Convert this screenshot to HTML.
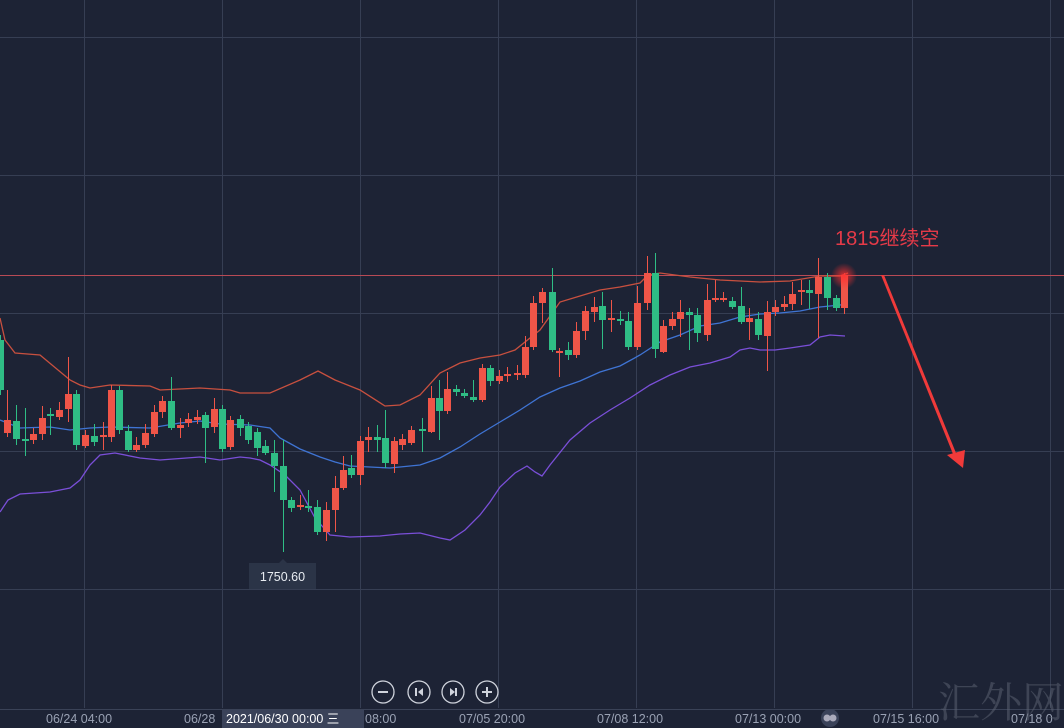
<!DOCTYPE html>
<html><head><meta charset="utf-8"><style>
html,body{margin:0;padding:0;background:#1d2335;width:1064px;height:728px;overflow:hidden}
svg{display:block}
text{font-family:"Liberation Sans","Noto Sans CJK SC",sans-serif}
</style></head><body>
<svg id="s" width="1064" height="728" viewBox="0 0 1064 728" xmlns="http://www.w3.org/2000/svg">
<defs>
<radialGradient id="g"><stop offset="0" stop-color="#ff3030" stop-opacity="0.85"/><stop offset="1" stop-color="#ff3030" stop-opacity="0"/></radialGradient>
</defs>
<rect width="1064" height="728" fill="#1d2335"/>
<g stroke="#363e53" stroke-width="1">
<line x1="0" y1="37.5" x2="1064" y2="37.5"/><line x1="0" y1="175.5" x2="1064" y2="175.5"/>
<line x1="0" y1="313.5" x2="1064" y2="313.5"/><line x1="0" y1="451.5" x2="1064" y2="451.5"/>
<line x1="0" y1="589.5" x2="1064" y2="589.5"/>
<line x1="84.5" y1="0" x2="84.5" y2="708"/><line x1="222.5" y1="0" x2="222.5" y2="708"/>
<line x1="360.5" y1="0" x2="360.5" y2="708"/><line x1="498.5" y1="0" x2="498.5" y2="708"/>
<line x1="636.5" y1="0" x2="636.5" y2="708"/><line x1="774.5" y1="0" x2="774.5" y2="708"/>
<line x1="912.5" y1="0" x2="912.5" y2="708"/><line x1="1050.5" y1="0" x2="1050.5" y2="708"/>
</g>
<line x1="0" y1="709.5" x2="1064" y2="709.5" stroke="#3a4257"/>
<line x1="0" y1="275.5" x2="1064" y2="275.5" stroke="#b84a55" stroke-width="1"/>
<polyline fill="none" stroke="#c8503f" stroke-width="1.3" points="0,318 5,340 15,353 40,355 70,380 80,385 90,388 110,385 150,386 160,390 200,388 230,390 240,393 270,393 300,380 318,371 335,380 360,390 385,406 400,405 420,395 440,373 460,363 480,358 500,355 515,350 540,330 560,302 580,296 600,290 620,287 640,283 648,275 660,273 690,277 720,280 760,282 790,281 820,276 840,276 848,273"/>
<polyline fill="none" stroke="#3f74d4" stroke-width="1.3" points="0,420 20,428 50,427 70,430 90,428 110,427 150,428 180,423 200,421 220,424 250,425 270,428 280,438 300,449 320,457 335,462 350,466 370,467 390,468 420,465 440,458 460,447 480,434 500,422 520,410 540,397 560,388 580,381 600,372 620,366 640,355 660,342 680,335 700,326 720,323 740,317 760,314 780,313 800,311 820,307 840,305 848,304"/>
<polyline fill="none" stroke="#7a4fd8" stroke-width="1.3" points="0,512 8,500 20,494 50,492 70,488 80,480 90,465 100,455 115,453 140,458 160,460 200,457 220,460 240,457 250,458 260,460 270,465 285,475 300,490 315,518 330,535 350,537 380,536 400,534 420,533 440,538 450,540 465,530 480,515 490,502 500,487 515,473 527,466 535,472 542,476 550,465 570,440 590,423 610,410 630,398 650,385 670,375 690,367 710,363 730,357 740,350 750,348 760,350 775,350 790,348 810,345 820,337 830,335 845,336"/>
<g id="c"></g>
<circle cx="844" cy="276" r="13" fill="url(#g)"/>
<text x="835" y="245" font-size="20" fill="#e63a48">1815继续空</text>
<polygon points="881,275 884,275 958,458 955,459" fill="#f03a3a"/>
<polygon points="947,455 963,468 965,450" fill="#f03a3a"/>
<rect x="249" y="563" width="67" height="26" fill="#2b3447"/>
<polygon points="279,563 283,559 287,563" fill="#2b3447"/>
<text x="282.5" y="581" font-size="12.5" fill="#e8ecf2" text-anchor="middle">1750.60</text>
<g fill="none" stroke="#cfd3dc" stroke-width="1.3">
<circle cx="383" cy="692" r="11"/><circle cx="419" cy="692" r="11"/><circle cx="453" cy="692" r="11"/><circle cx="487" cy="692" r="11"/>
<line x1="378" y1="692" x2="388" y2="692" stroke-width="2"/>
<line x1="482" y1="692" x2="492" y2="692" stroke-width="2"/><line x1="487" y1="687" x2="487" y2="697" stroke-width="2"/>
<line x1="416" y1="688" x2="416" y2="696" stroke-width="2"/>
<line x1="456" y1="688" x2="456" y2="696" stroke-width="2"/>
</g>
<polygon points="423,688 423,696 418,692" fill="#cfd3dc"/>
<polygon points="450,688 450,696 455,692" fill="#cfd3dc"/>
<rect x="222" y="710" width="142" height="18" fill="#3a4259"/>
<g font-size="12.5" fill="#9aa2b4">
<text x="46" y="723">06/24 04:00</text>
<text x="184" y="723">06/28</text>
<text x="365" y="723">08:00</text>
<text x="459" y="723">07/05 20:00</text>
<text x="597" y="723">07/08 12:00</text>
<text x="735" y="723">07/13 00:00</text>
<text x="873" y="723">07/15 16:00</text>
<text x="1011" y="723">07/18 0</text>
</g>
<text x="226" y="723" font-size="12.5" fill="#ffffff">2021/06/30 00:00 三</text>
<circle cx="830" cy="718" r="9" fill="#3a4259"/><circle cx="827" cy="718" r="3.5" fill="#aab"/><circle cx="833" cy="718" r="3.5" fill="#aab"/>
<text x="938" y="717" font-size="42" fill="#5a6070" fill-opacity="0.55" style="font-family:'Noto Serif CJK SC',serif">汇外网</text>
</svg>
<script>
var d=[[0,340,390,335,395,'g'],[7,420,433,390,437,'r'],[16,421,439,405,445,'g'],[25,439,441,408,456,'g'],[33,434,440,428,444,'r'],[42,418,434,406,440,'r'],[50,414,416,408,435,'g'],[59,410,417,402,420,'r'],[68,394,409,357,422,'r'],[76,394,445,390,450,'g'],[85,435,446,430,448,'r'],[94,436,442,424,446,'g'],[103,435,437,422,450,'r'],[111,390,437,385,442,'r'],[119,390,430,386,434,'g'],[128,431,450,425,452,'g'],[136,445,450,437,452,'r'],[145,433,445,424,448,'r'],[154,412,434,405,437,'r'],[162,401,412,396,418,'r'],[171,401,428,377,430,'g'],[180,425,428,418,438,'r'],[188,419,423,413,427,'r'],[197,417,420,410,424,'r'],[205,415,428,412,463,'g'],[214,409,427,398,433,'r'],[222,409,449,405,452,'g'],[230,420,447,416,450,'r'],[240,419,428,415,436,'g'],[248,426,440,422,444,'g'],[257,432,448,428,456,'g'],[265,446,453,440,455,'g'],[274,453,466,440,492,'g'],[283,466,500,440,552,'g'],[291,500,508,497,512,'g'],[300,505,507,495,510,'r'],[308,506,508,490,512,'g'],[317,507,532,500,535,'g'],[326,510,532,502,541,'r'],[335,488,510,476,532,'r'],[343,470,488,456,490,'r'],[351,468,475,455,478,'g'],[360,441,475,436,485,'r'],[368,437,440,427,452,'r'],[377,437,440,425,452,'g'],[385,438,463,410,468,'g'],[394,441,464,437,473,'r'],[402,439,445,434,450,'r'],[411,430,443,426,445,'r'],[422,429,431,418,452,'g'],[431,398,432,386,433,'r'],[439,398,411,380,440,'g'],[447,389,411,372,414,'r'],[456,389,392,385,396,'g'],[464,393,396,389,398,'g'],[473,397,400,380,402,'g'],[482,368,400,364,402,'r'],[490,368,381,365,386,'g'],[499,376,381,370,384,'r'],[507,374,376,367,382,'r'],[517,373,375,365,380,'r'],[525,347,375,336,378,'r'],[533,303,347,296,350,'r'],[542,292,303,288,323,'r'],[552,292,350,268,352,'g'],[559,351,353,348,377,'r'],[568,350,355,342,360,'g'],[576,331,355,322,358,'r'],[585,311,331,306,340,'r'],[594,307,312,297,322,'r'],[602,306,320,292,349,'g'],[611,318,320,300,332,'r'],[620,319,321,311,325,'g'],[628,321,347,312,350,'g'],[637,303,347,286,350,'r'],[647,273,303,256,310,'r'],[655,273,349,253,358,'g'],[663,326,352,320,353,'r'],[672,319,326,312,330,'r'],[680,312,319,300,337,'r'],[689,312,315,308,350,'g'],[697,315,333,308,342,'g'],[707,300,335,284,341,'r'],[715,298,300,280,302,'r'],[723,298,300,292,302,'r'],[732,301,307,297,309,'g'],[741,306,322,287,324,'g'],[749,318,322,308,340,'r'],[758,319,335,312,340,'g'],[767,312,336,301,371,'r'],[775,307,312,300,316,'r'],[784,304,307,296,311,'r'],[792,294,304,282,310,'r'],[801,290,292,280,305,'r'],[809,290,293,280,309,'g'],[818,277,294,258,338,'r'],[827,277,298,273,310,'g'],[836,298,308,295,311,'g'],[844,275,308,273,314,'r']];
var h='';d.forEach(function(c){var col=c[5]=='r'?'#ef5548':'#2fbd85';var t=Math.min(c[1],c[2]),b=Math.max(c[1],c[2]);if(b-t<1.5)b=t+1.5;
h+='<line x1="'+(c[0]+.5)+'" y1="'+c[3]+'" x2="'+(c[0]+.5)+'" y2="'+c[4]+'" stroke="'+col+'" stroke-width="1"/><rect x="'+(c[0]-3)+'" y="'+t+'" width="7" height="'+(b-t)+'" fill="'+col+'"/>';});
document.getElementById('c').innerHTML=h;
</script>
</body></html>
